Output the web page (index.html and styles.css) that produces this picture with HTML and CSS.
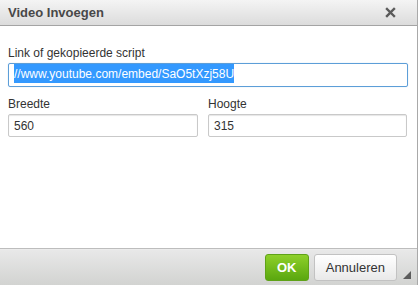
FILE: index.html
```html
<!DOCTYPE html>
<html>

<head>
  <meta charset="UTF-8" />
  <title>Video Invoegen</title>

  <link rel="stylesheet" href="styles.css">
</head>

<body>
  <div class="dialog">
    <div class="dialog-title">
      <b>Video Invoegen</b>
      <span class="dialog-close">
        <svg width="11" height="11" viewBox="0 0 11 11">
          <path d="M2 2 L9 9 M9 2 L2 9" stroke="#5a5a5a" stroke-width="2.4" stroke-linecap="square" />
        </svg>
      </span>
    </div>
    <div class="dialog-body">
      <div class="field">
        <label>Link of gekopieerde script</label>
        <div class="input focus"><span class="selected">//www.youtube.com/embed/SaO5tXzj58U</span></div>
      </div>
      <div class="row">
        <div class="field">
          <label>Breedte</label>
          <div class="input">560</div>
        </div>
        <div class="field">
          <label>Hoogte</label>
          <div class="input">315</div>
        </div>
      </div>
    </div>
    <div class="dialog-footer">
      <button class="btn btn-ok">OK</button>
      <button class="btn">Annuleren</button>
      <span class="grip"></span>
    </div>
  </div>
</body>

</html>
```

FILE: styles.css
```css
body {
  margin: 0;
  font-family: "Liberation Sans", Arial, sans-serif;
  color: #333;
}

.dialog {
  position: relative;
  width: 417px;
  height: 285px;
  border-right: 1px solid #a9a9a9;
  display: flex;
  flex-direction: column;
  background: #fff;

  .dialog-title {
    height: 25px;
    display: flex;
    align-items: center;
    justify-content: space-between;
    padding: 0 21px 0 8px;
    background: linear-gradient(#f4f4f4, #dcdcdc);
    border-bottom: 1px solid #a4a4a4;
    font-size: 13px;
    color: #484848;
  }

  .dialog-close {
    display: flex;
  }

  .dialog-body {
    flex: 1;
    padding: 20px 9px 0 8px;
  }

  .dialog-footer {
    position: relative;
    height: 37px;
    border-top: 1px solid #bdbdbd;
    box-shadow: inset 0 1px 0 #ececec;
    background: linear-gradient(#e9e9e9, #d2d3d1);
    display: flex;
    align-items: flex-start;
    justify-content: flex-end;
    gap: 5px;
    padding: 5px 20px 0 0;
    box-sizing: border-box;
  }
}

.field {
  label {
    display: block;
    font-size: 12px;
    line-height: 14px;
    margin-bottom: 3px;
  }
}

.row {
  display: flex;
  gap: 10px;
  margin-top: 10px;

  .field {
    flex: 0 0 190px;
  }

  .field + .field {
    flex: 0 0 199px;
  }
}

.input {
  height: 23px;
  line-height: 23px;
  box-sizing: border-box;
  padding: 0 5px;
  border: 1px solid #c9c9c9;
  border-radius: 2px;
  box-shadow: inset 0 1px 1px #e6e6e6;
  font-size: 12px;
  color: #333;
  white-space: nowrap;
  overflow: hidden;
}

.input.focus {
  height: 24px;
  line-height: 21px;
  border-color: #5d9ed8;
  box-shadow: 0 0 1px #9ec6ea;
}

.selected {
  background: #3399ff;
  color: #fff;
  padding: 3px 0 2px;
}

.btn {
  height: 27px;
  padding: 0 11px;
  font-family: "Liberation Sans", Arial, sans-serif;
  font-size: 13px;
  color: #333;
  border: 1px solid #c2c2c2;
  border-radius: 3px;
  background: linear-gradient(#ffffff, #e9e9e9);
}

.btn-ok {
  width: 44px;
  font-weight: bold;
  color: #fff;
  border-color: #5fa218;
  background: linear-gradient(#8ed02a, #5aa70f);
}

.grip {
  position: absolute;
  right: 6px;
  bottom: 6px;
  width: 0;
  height: 0;
  border-left: 8px solid transparent;
  border-bottom: 8px solid #5c5c5c;
}
```
